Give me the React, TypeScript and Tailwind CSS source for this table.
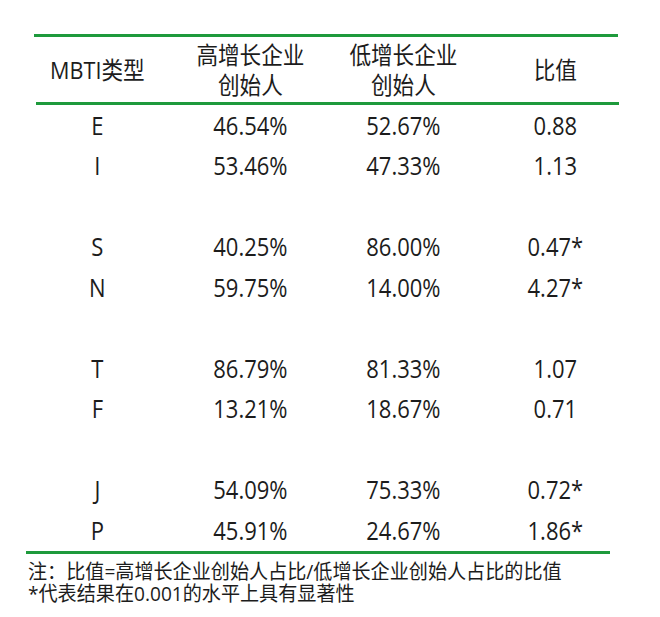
import React from "react";

const rows: (string[] | null)[] = [
  ["E", "46.54%", "52.67%", "0.88"],
  ["I", "53.46%", "47.33%", "1.13"],
  null,
  ["S", "40.25%", "86.00%", "0.47*"],
  ["N", "59.75%", "14.00%", "4.27*"],
  null,
  ["T", "86.79%", "81.33%", "1.07"],
  ["F", "13.21%", "18.67%", "0.71"],
  null,
  ["J", "54.09%", "75.33%", "0.72*"],
  ["P", "45.91%", "24.67%", "1.86*"],
];

export default function App() {
  return (
    <div
      className="w-[660px] h-[617px] bg-white text-[#1c1c1c] overflow-hidden"
      style={{ fontFamily: '"Open Sans", "Noto Sans CJK SC", sans-serif' }}
    >
      <div className="h-[34px]" />
      <div className="ml-[34px] w-[584px] h-[3px] bg-[#1e9a3c]" />
      <div className="ml-[21px] w-[611px] h-[65px] grid grid-cols-4 items-center text-[24px] leading-[30px] text-center">
        <div className="scale-x-[0.9]">MBTI类型</div>
        <div className="scale-x-[0.9]">
          <div>高增长企业</div>
          <div>创始人</div>
        </div>
        <div className="scale-x-[0.9]">
          <div>低增长企业</div>
          <div>创始人</div>
        </div>
        <div className="scale-x-[0.9]">比值</div>
      </div>
      <div className="ml-[36px] w-[583px] h-[3px] bg-[#1e9a3c]" />
      <div className="ml-[21px] w-[611px] text-[25px] text-center">
        {rows.map((r, i) =>
          r ? (
            <div key={i} className="grid grid-cols-4 h-[40.5px] items-center">
              {r.map((c, j) => (
                <div key={j} className="scale-x-[0.88]">
                  {c}
                </div>
              ))}
            </div>
          ) : (
            <div key={i} className="h-[40.5px]" />
          )
        )}
      </div>
      <div className="ml-[26px] w-[584px] h-[3px] bg-[#1e9a3c]" />
      <div className="ml-[28px] pt-[7px] text-[20px] leading-[22px] origin-left scale-x-[0.955]">
        <div>注：比值=高增长企业创始人占比/低增长企业创始人占比的比值</div>
        <div>*代表结果在0.001的水平上具有显著性</div>
      </div>
    </div>
  );
}
